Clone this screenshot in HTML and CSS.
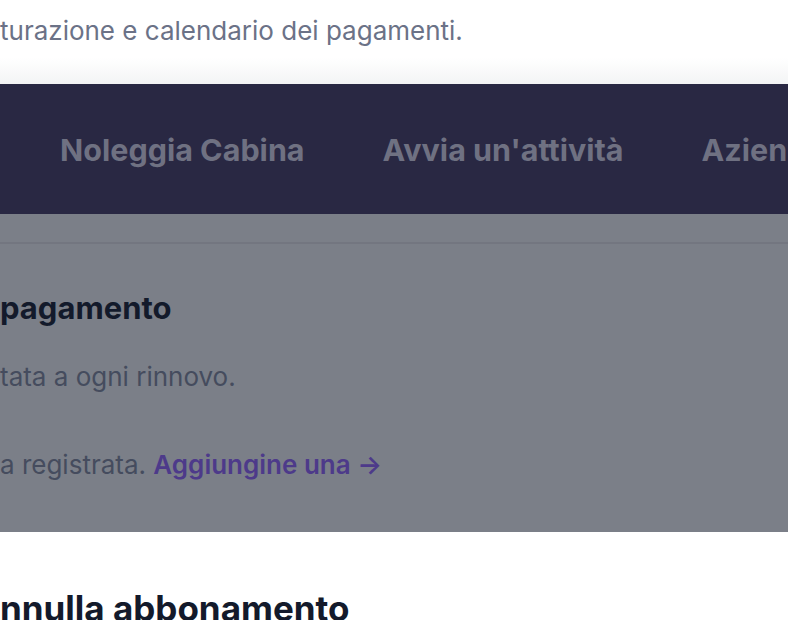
FILE: index.html
```html
<!DOCTYPE html>
<html lang="it">
<head>
    <meta charset="UTF-8">
    <meta name="viewport" content="width=device-width, initial-scale=1.0">
    <title>Abbonamento - Fatturazione</title>
    <link rel="stylesheet" href="styles.css">
</head>
<body>
    <header class="page-head">
        <p class="subtitle">turazione e calendario dei pagamenti.</p>
    </header>

    <nav class="topbar">
        <a href="#">Noleggia Cabina</a>
        <a href="#">Avvia un'attività</a>
        <a href="#">Aziende</a>
    </nav>

    <section class="payment">
        <div class="rule"></div>
        <h2>pagamento</h2>
        <p class="note">tata a ogni rinnovo.</p>
        <p class="note">a registrata. <a class="add-link" href="#">Aggiungine una →</a></p>
    </section>

    <section class="cancel">
        <h2>nnulla abbonamento</h2>
    </section>
</body>
</html>
```

FILE: styles.css
```css
body {
    font-family: Inter, "Noto Sans", sans-serif;
    margin: 0;
    overflow: hidden;
    background: #ffffff;
    color: #131a2b;
}
.page-head {
    height: 84px;
    background: linear-gradient(to bottom, #ffffff 0, #ffffff 58px, #f3f4f5 84px);
}
.subtitle {
    margin: 0;
    padding-top: 15px;
    font-size: 26px;
    line-height: 32px;
    color: #6b7287;
}
.topbar {
    height: 130px;
    background: #292843;
    display: flex;
    align-items: center;
    gap: 78px;
    padding-left: 60px;
    white-space: nowrap;
    overflow: hidden;
}
.topbar a {
    color: #6f7182;
    font-size: 30.5px;
    font-weight: 700;
    text-decoration: none;
}
.payment {
    height: 318px;
    background: #7b7f88;
    padding-top: 28px;
    box-sizing: border-box;
}
.rule {
    height: 2px;
    background: #737680;
}
.payment h2 {
    margin: 46px 0 0;
    font-size: 31px;
    line-height: 36px;
    font-weight: 700;
    color: #131a2b;
}
.note {
    margin: 36px 0 0;
    font-size: 26px;
    line-height: 30px;
    color: #454c5e;
}
.note + .note {
    margin-top: 58px;
}
.add-link {
    color: #4d3a8a;
    font-weight: 600;
    text-decoration: none;
}
.cancel {
    padding-top: 56px;
}
.cancel h2 {
    margin: 0;
    font-size: 35px;
    line-height: 40px;
    font-weight: 700;
    color: #131a2b;
}
```
